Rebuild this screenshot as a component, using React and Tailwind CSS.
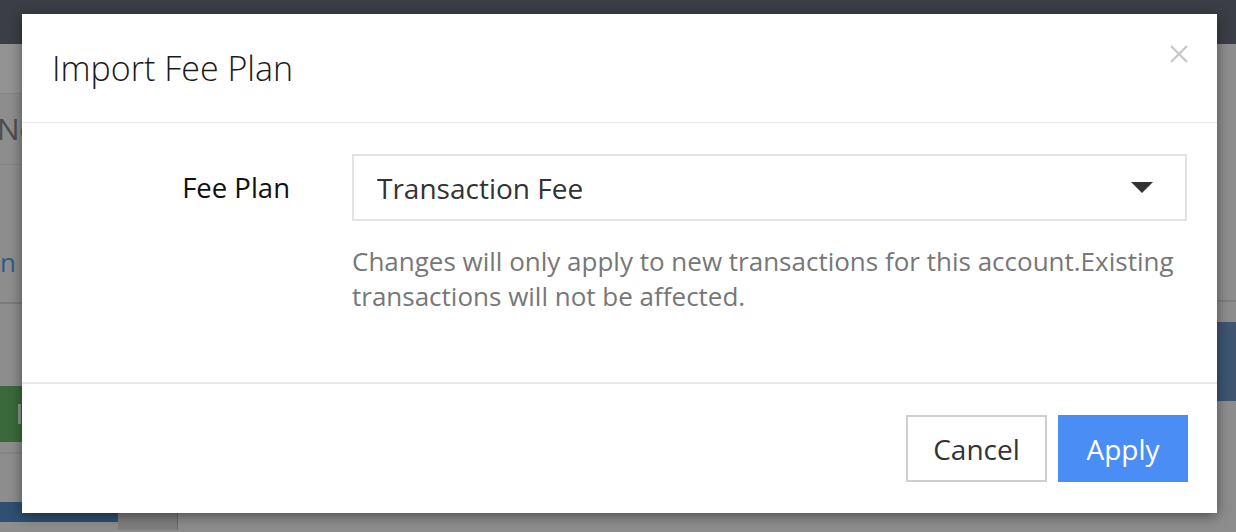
import { useState } from "react";

function PageBehind() {
  return (
    <div className="h-[532px] w-[1236px] overflow-hidden bg-[#8d8d8d] font-['Open_Sans',sans-serif]">
      <div className="h-[44px] bg-[#3b3f45]" />
      <div className="flex h-[488px]">
        <div className="flex w-[190px] flex-col">
          <div className="h-[50px] border-b border-[#858585] bg-[#939393]" />
          <div className="flex h-[70px] items-center overflow-hidden whitespace-nowrap text-[30px] leading-none text-[#4e4e4e]">
            <span className="-ml-[3px]">No</span>
          </div>
          <div className="h-[138px] border-t border-[#858585] pt-[84px]">
            <span className="text-[26px] leading-none text-[#2f5a86]">n</span>
          </div>
          <div className="h-[84px] border-t-2 border-[#7b7b7b]" />
          <div className="flex h-[56px] w-[60px] items-center bg-[#3a6a3b] pl-[18px]">
            <div className="h-[20px] w-[3px] bg-[#8a9a8a]" />
          </div>
          <div className="mt-[10px] h-[50px] border-t-2 border-[#858585]" />
          <div className="flex">
            <div className="h-[20px] w-[118px] bg-[#2e5072]" />
            <div className="h-[28px] w-[60px] border-r border-[#5a6b7a] bg-[#7e7e7e]" />
          </div>
        </div>
        <div className="flex-1" />
        <div className="flex w-[40px] flex-col">
          <div className="h-[258px] border-b-2 border-[#7e7e7e]" />
          <div className="mt-[20px] h-[79px] bg-[#3d556f]" />
        </div>
      </div>
    </div>
  );
}

export default function App() {
  const [plan, setPlan] = useState("Transaction Fee");

  return (
    <div className="relative h-[532px] w-[1236px] overflow-hidden font-['Open_Sans',sans-serif]">
      <PageBehind />
      <div className="absolute inset-0 pl-[22px] pt-[14px]">
        <div className="flex h-[499px] w-[1195px] flex-col bg-white shadow-[0_3px_12px_rgba(0,0,0,0.45)]">
          {/* header */}
          <div className="flex h-[109px] shrink-0 items-start justify-between border-b border-[#e8e8e8] pl-[30px] pr-[28px]">
            <h2 className="pt-[34px] text-[34px] font-light leading-[40px] text-[#1a1a1a]">Import Fee Plan</h2>
            <button className="pt-[24px] text-[#c9c9c9]">
              <svg width="20" height="20" viewBox="0 0 20 20" className="mt-[6px]">
                <path d="M2 2 L18 18 M18 2 L2 18" stroke="currentColor" strokeWidth="2.4" />
              </svg>
            </button>
          </div>

          {/* body */}
          <div className="flex h-[261px] shrink-0 border-b-2 border-[#e8e8e8] pt-[31px]">
            <div className="flex h-[67px] w-[268px] shrink-0 items-center justify-end text-[27.5px] text-[#111]">
              Fee Plan
            </div>
            <div className="ml-[62px] w-[835px]">
              <div className="relative">
                <select
                  value={plan}
                  onChange={(e) => setPlan(e.target.value)}
                  className="h-[67px] w-full appearance-none border-2 border-[#e3e3e3] bg-white pl-[23px] text-[28px] text-[#333] outline-none"
                >
                  <option>Transaction Fee</option>
                  <option>Monthly Fee</option>
                </select>
                <svg
                  width="22"
                  height="12"
                  viewBox="0 0 22 12"
                  className="pointer-events-none absolute right-[34px] top-[28px]"
                >
                  <path d="M0 0 L22 0 L11 11 Z" fill="#333" />
                </svg>
              </div>
              <p className="mt-[23px] text-[26px] leading-[35px] text-[#777]">
                Changes will only apply to new transactions for this account.Existing transactions will not be affected.
              </p>
            </div>
          </div>

          {/* footer */}
          <div className="flex flex-1 items-start justify-end gap-[11px] pr-[29px] pt-[31px]">
            <button className="h-[67px] w-[141px] border-2 border-[#cfcfcf] bg-white text-[28px] text-[#333]">
              Cancel
            </button>
            <button className="h-[67px] w-[130px] bg-[#4a8ef5] text-[28px] text-white">Apply</button>
          </div>
        </div>
      </div>
    </div>
  );
}
